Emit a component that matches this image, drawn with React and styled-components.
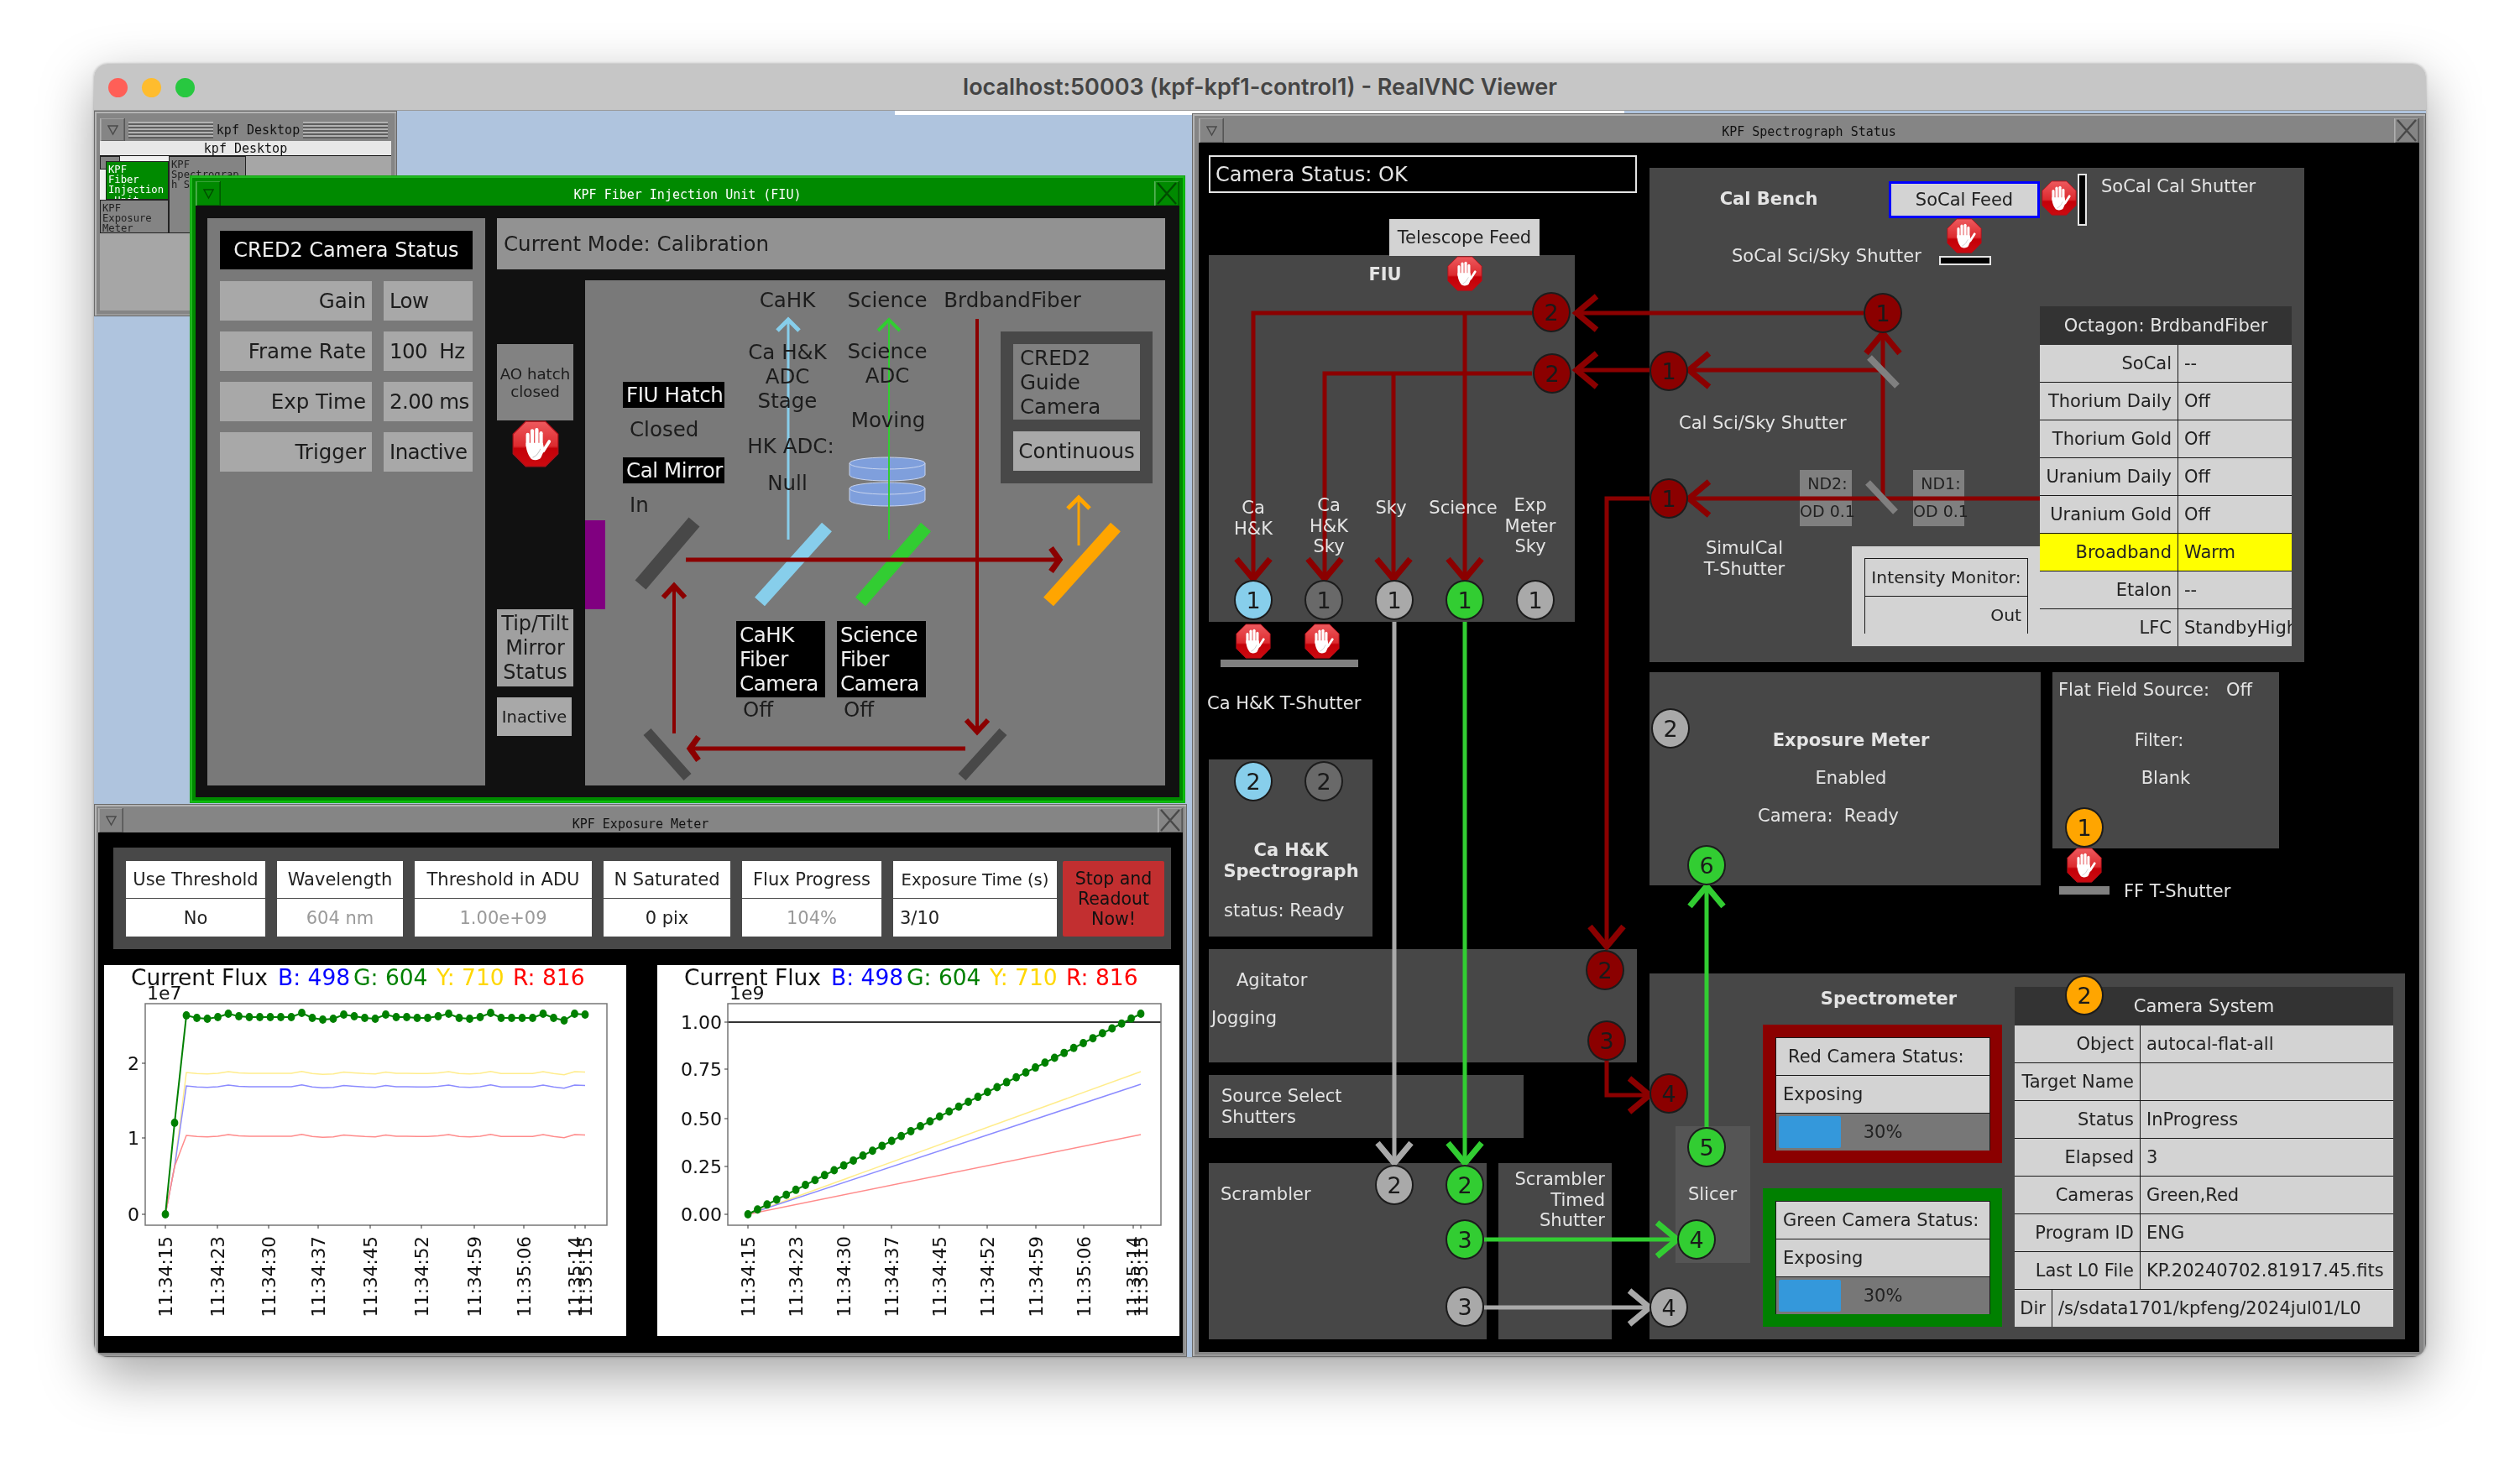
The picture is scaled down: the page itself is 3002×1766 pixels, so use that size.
import styled, { createGlobalStyle, css } from 'styled-components';

const GlobalStyle = createGlobalStyle`
   html, body { margin: 0; padding: 0; background: #ffffff; }
   * { box-sizing: border-box; }
`;

const SANS = `'DejaVu Sans', 'Liberation Sans', sans-serif`;
const MONO = `'DejaVu Sans Mono', 'Liberation Mono', monospace`;

// diagrams keep the page coordinates, each canvas only subtracts its origin
const box = (ox, oy) => css`
   position: absolute;
   left: ${p => p.$x - ox}px;
   top: ${p => p.$y - oy}px;
   width: ${p => p.$x2 - p.$x}px;
   height: ${p => p.$y2 - p.$y}px;
`;
const anchored = (ox, oy) => css`
   position: absolute;
   left: ${p => p.$x - ox}px;
   top: ${p => p.$y - oy}px;
   transform: translate(${p => (p.$align === 'left' ? '0' : p.$align === 'right' ? '-100%' : '-50%')}, -50%);
   text-align: ${p => p.$align || 'center'};
   white-space: pre;
`;

const Page = styled.div`
   width: 3002px;
   height: 1766px;
   padding: 76px 0 0 112px;
   overflow: hidden;
   background: #ffffff;
   font-family: ${SANS};
`;
const MacWindow = styled.div`
   width: 2778px;
   height: 1541px;
   border-radius: 16px;
   overflow: hidden;
   display: flex;
   flex-direction: column;
   box-shadow: 0 22px 64px rgba(0, 0, 0, 0.36), 0 0 3px rgba(0, 0, 0, 0.3);
`;
const MacBar = styled.div`
   height: 56px;
   flex: none;
   position: relative;
   display: flex;
   align-items: center;
   justify-content: center;
   background: #c6c6c6;
   border-bottom: 1px solid #9a9a9a;
   font-family: Inter, 'Liberation Sans', sans-serif;
   font-weight: 600;
   font-size: 27px;
   color: #444444;
`;
const Lights = styled.div`
   position: absolute;
   left: 17px;
   top: 17px;
   display: flex;
   gap: 17px;
`;
const Light = styled.span`
   width: 23px;
   height: 23px;
   border-radius: 50%;
   background: ${p => p.$color};
`;
const Desktop = styled.div`
   position: relative;
   flex: 1;
   background: #afc4de;
   filter: blur(0.5px);
`;
const TopStrip = styled.div`
   position: absolute;
   left: 954px;
   top: 0;
   width: 869px;
   height: 5px;
   background: #ffffff;
`;

const WinFrame = styled.div`
   position: absolute;
   left: ${p => p.$left}px;
   top: ${p => p.$top}px;
   width: ${p => p.$width}px;
   height: ${p => p.$height}px;
   display: flex;
   flex-direction: column;
   padding: ${p => p.$pad || 6}px ${p => p.$padX || p.$pad || 6}px;
   background: ${p => (p.$green ? '#008a00' : '#858585')};
   border: 1px solid ${p => (p.$green ? '#14a814' : '#6a6a6a')};
   box-shadow: inset 2px 2px 0 ${p => (p.$green ? '#1fb81f' : '#b4b4b4')}, inset -2px -2px 0 ${p => (p.$green ? '#0cc00c' : '#9a9a9a')};
`;
const WinTitle = styled.div`
   height: ${p => p.$h || 29}px;
   flex: none;
   display: flex;
   align-items: center;
   font-family: ${MONO};
   font-size: 15px;
   color: ${p => (p.$green ? '#ffffff' : '#111111')};
`;
const TitleKey = styled.div`
   width: 30px;
   height: 100%;
   flex: none;
   display: flex;
   align-items: center;
   justify-content: center;
   color: rgba(0, 0, 0, 0.45);
   border-right: 1px solid rgba(0, 0, 0, 0.35);
   border-left: 1px solid rgba(255, 255, 255, 0.35);
   box-shadow: inset 1px 1px 0 rgba(255, 255, 255, 0.22), inset -1px -1px 0 rgba(0, 0, 0, 0.22);
`;
const TitleText = styled.div`
   flex: 1;
   text-align: center;
   white-space: pre;
   padding-top: ${p => p.$drop || 0}px;
`;

// pager
const Pager = styled(WinFrame)`
   padding: 8px 6px 6px;
`;
const Stripes = styled.span`
   flex: 1;
   height: 20px;
   margin: 0 4px;
   background: repeating-linear-gradient(to bottom, #b2b2b2 0 2px, #5e5e5e 2px 4px);
`;
const PagerName = styled.div`
   height: 18px;
   flex: none;
   display: flex;
   align-items: center;
   justify-content: center;
   background: #e8e8e8;
   border-bottom: 1px solid #111111;
   font-family: ${MONO};
   font-size: 15px;
   color: #111111;
`;
const PagerArea = styled.div`
   position: relative;
   flex: 1;
   background: #a6a6a6;
`;
const MiniWin = styled.div`
   position: absolute;
   left: ${p => p.$left}px;
   top: ${p => p.$top}px;
   width: ${p => p.$w}px;
   height: ${p => p.$h}px;
   overflow: hidden;
   padding: 3px 2px;
   background: ${p => (p.$green ? '#008a00' : p.$blank ? '#f0f0f0' : '#848484')};
   color: ${p => (p.$green ? '#ffffff' : '#222222')};
   border: ${p => (p.$blank ? 'none' : '1px solid #222222')};
   font-family: ${MONO};
   font-size: 12.2px;
   line-height: 12.2px;
   white-space: pre;
`;

// FIU window
const FiuBody = styled.div`
   flex: 1;
   display: grid;
   grid-template-columns: 331px 91px 691px;
   grid-template-rows: 61px 602px;
   column-gap: 14px;
   row-gap: 13px;
   padding: 15px 0 0 14px;
   background: #111111;
   color: #1c1c1c;
   font-size: 24.5px;
`;
const FiuStatus = styled.div`
   grid-row: 1 / span 2;
   display: grid;
   grid-template-columns: 181px 106px;
   grid-auto-rows: 47px;
   column-gap: 14px;
   row-gap: 13px;
   align-content: start;
   padding: 15px;
   background: #797979;
`;
const StatusHead = styled.div`
   grid-column: 1 / span 2;
   height: 46px;
   display: flex;
   align-items: center;
   justify-content: center;
   background: #000000;
   color: #f0f0f0;
   font-size: 24px;
`;
const StatusCell = styled.div`
   display: flex;
   align-items: center;
   justify-content: ${p => (p.$label ? 'flex-end' : 'flex-start')};
   padding: 0 7px;
   background: #a8a8a8;
   white-space: pre;
   letter-spacing: ${p => (p.$label ? 0 : -0.6)}px;
`;
const ModeBar = styled.div`
   grid-column: 2 / span 2;
   display: flex;
   align-items: center;
   padding-left: 8px;
   background: #929292;
`;
const FiuMiddle = styled.div`
   display: flex;
   flex-direction: column;
   align-items: flex-start;
   padding-top: 76px;
`;
const HatchBox = styled.div`
   width: 91px;
   height: 91px;
   display: flex;
   align-items: center;
   justify-content: center;
   text-align: center;
   background: #828282;
   font-size: 18.2px;
   line-height: 21px;
`;
const TiltBox = styled.div`
   width: 91px;
   height: 92px;
   margin-top: 169px;
   display: flex;
   align-items: center;
   justify-content: center;
   text-align: center;
   background: #a0a0a0;
   font-size: 24px;
   line-height: 29px;
`;
const TiltState = styled.div`
   width: 89px;
   height: 46px;
   margin-top: 13px;
   display: flex;
   align-items: center;
   justify-content: center;
   background: #a8a8a8;
   font-size: 19.5px;
`;
const HatchStop = styled.div`
   width: 91px;
   display: flex;
   justify-content: center;
`;
const FiuCanvas = styled.div`
   position: relative;
   background: #797979;
`;
const FiuText = styled.div`
   ${anchored(697, 334)}
   line-height: 29px;
`;
const FiuTag = styled.div`
   ${box(697, 334)}
   display: flex;
   align-items: center;
   padding-left: 4px;
   background: #000000;
   color: #f0f0f0;
   white-space: pre-line;
   line-height: 29px;
   letter-spacing: -0.4px;
`;
const Purple = styled.div`
   ${box(697, 334)}
   background: #800080;
`;
const GuideBox = styled.div`
   ${box(697, 334)}
   display: flex;
   flex-direction: column;
   gap: 14px;
   padding: 15px;
   background: #484848;
`;
const GuideName = styled.div`
   height: 91px;
   display: flex;
   align-items: center;
   padding-left: 8px;
   background: #808080;
   white-space: pre-line;
   line-height: 29px;
`;
const GuideMode = styled.div`
   height: 47px;
   display: flex;
   align-items: center;
   justify-content: center;
   background: #a8a8a8;
`;
const FiuSvg = styled.svg`
   position: absolute;
   left: 0;
   top: 0;
`;

// exposure meter window
const MeterBody = styled.div`
   flex: 1;
   display: flex;
   flex-direction: column;
   background: #000000;
   padding-top: 18px;
`;
const MeterBar = styled.div`
   display: flex;
   gap: 14px;
   height: 121px;
   width: 1260px;
   margin-left: 18px;
   padding: 16px 7px 0 15px;
   background: #484848;
`;
const MeterCell = styled.div`
   width: ${p => p.$w}px;
   height: 90px;
   display: grid;
   grid-template-rows: 44px 45px;
   row-gap: 1px;
`;
const MeterName = styled.div`
   display: flex;
   align-items: center;
   justify-content: center;
   background: #ffffff;
   color: #222222;
   font-size: ${p => p.$size || 21}px;
   white-space: pre;
`;
const MeterValue = styled(MeterName)`
   justify-content: ${p => (p.$left ? 'flex-start' : 'center')};
   padding-left: ${p => (p.$left ? 8 : 0)}px;
   color: ${p => (p.$dim ? '#9a9a9a' : '#222222')};
   font-size: 21px;
`;
const StopNow = styled.div`
   width: 121px;
   height: 90px;
   margin-left: -7px;
   display: flex;
   align-items: center;
   justify-content: center;
   text-align: center;
   background: #c22f30;
   border-radius: 2px;
   color: #111111;
   font-size: 20.5px;
   line-height: 24px;
`;
const Plots = styled.div`
   display: flex;
   gap: 37px;
   margin-top: 19px;
   padding-left: 7px;
`;
const PlotSvg = styled.svg`
   display: block;
   background: #ffffff;
   font-family: ${SANS};
`;

// spectrograph window
const SpecBody = styled.div`
   position: relative;
   flex: 1;
   background: #000000;
   color: #e4e4e4;
   font-size: 21px;
`;
const SpecSvg = styled.svg`
   position: absolute;
   left: 0;
   top: 0;
`;
const SpecPanel = styled.div`
   ${box(1428, 170)}
   background: ${p => p.$color || '#474747'};
`;
const SpecText = styled.div`
   ${anchored(1428, 170)}
   line-height: 24.5px;
   font-weight: ${p => (p.$bold ? 700 : 400)};
   color: ${p => p.$color || '#e4e4e4'};
`;
const CameraStatus = styled.div`
   ${box(1428, 170)}
   display: flex;
   align-items: center;
   padding-left: 6px;
   border: 2px solid #e4e4e4;
   font-size: 24px;
`;
const FeedButton = styled.div`
   ${box(1428, 170)}
   display: flex;
   align-items: center;
   justify-content: center;
   background: #d3d3d3;
   color: #222222;
   border: ${p => (p.$active ? '3px solid #0000ff' : 'none')};
`;
const Bar = styled.div`
   ${box(1428, 170)}
   background: ${p => (p.$outlined ? '#000000' : '#808080')};
   border: ${p => (p.$outlined ? '2px solid #e4e4e4' : 'none')};
`;
const FilterTag = styled.div`
   ${box(1428, 170)}
   display: grid;
   grid-template-rows: 31px 36px;
   justify-items: center;
   align-items: center;
   background: #808080;
   color: #222222;
   font-size: 19px;
   white-space: pre;
`;
const Node = styled.div`
   position: absolute;
   left: ${p => p.$x - 1428 - 23}px;
   top: ${p => p.$y - 170 - 24}px;
   width: 46px;
   height: 48px;
   display: flex;
   align-items: center;
   justify-content: center;
   border-radius: 50%;
   background: ${p => p.$color};
   border: 2px solid #1c1c1c;
   color: #1a1a1a;
   font-size: 27px;
`;
const StopAt = styled.div`
   position: absolute;
   left: ${p => p.$x - 1428 - 21}px;
   top: ${p => p.$y - 170 - 21}px;
   display: flex;
`;
const DataTable = styled.div`
   ${box(1428, 170)}
   display: flex;
   flex-direction: column;
   color: #222222;
`;
const TableHead = styled.div`
   flex: none;
   height: ${p => p.$h}px;
   display: flex;
   align-items: center;
   justify-content: center;
   background: #333333;
   color: #e4e4e4;
`;
const TableRows = styled.div`
   display: flex;
   flex-direction: column;
   gap: 1px;
   background: #1a1a1a;
`;
const TableRow = styled.div`
   display: grid;
   grid-template-columns: ${p => p.$label}px 1fr;
   column-gap: 1px;
   height: 44px;
`;
const TableCell = styled.div`
   display: flex;
   align-items: center;
   justify-content: ${p => (p.$label ? 'flex-end' : 'flex-start')};
   padding: 0 7px;
   overflow: hidden;
   white-space: pre;
   background: ${p => (p.$hot ? '#ffff00' : '#d3d3d3')};
`;
const MonitorBox = styled.div`
   ${box(1428, 170)}
   padding: 14px 15px;
   background: #d3d3d3;
   color: #222222;
   font-size: 20.3px;
`;
const MonitorInner = styled.div`
   display: grid;
   grid-template-rows: 44px 44px;
   height: 90px;
   row-gap: 1px;
   background: #1a1a1a;
   border: 1px solid #1a1a1a;
`;
const MonitorCell = styled.div`
   display: flex;
   align-items: center;
   justify-content: ${p => (p.$right ? 'flex-end' : 'center')};
   padding: 0 7px;
   background: #d3d3d3;
   white-space: pre;
`;
const CameraFrame = styled.div`
   ${box(1428, 170)}
   padding: 15px 14px 15px 15px;
   background: ${p => p.$color};
`;
const CameraRows = styled.div`
   display: grid;
   grid-template-rows: 44px 44px 44px;
   row-gap: 1px;
   height: 135px;
   background: #1a1a1a;
   border: 1px solid #1a1a1a;
   color: #222222;
`;
const CameraCell = styled.div`
   display: flex;
   align-items: center;
   padding-left: ${p => p.$pad || 8}px;
   background: #d3d3d3;
`;
const Progress = styled.div`
   position: relative;
   display: flex;
   align-items: center;
   justify-content: center;
   padding: 3px;
   background: #777777;
`;
const ProgressFill = styled.div`
   position: absolute;
   left: 3px;
   top: 3px;
   bottom: 3px;
   width: 74px;
   border-radius: 2px;
   background: #3498db;
`;

const StopSign = ({ size = 42 }) => (
   <svg width={size} height={size} viewBox='0 0 48 48'>
      <defs>
         <linearGradient id='stopFill' x1='0' y1='0' x2='0' y2='1'>
            <stop offset='0' stopColor='#ee5a5e' />
            <stop offset='0.55' stopColor='#dc2a2e' />
            <stop offset='0.6' stopColor='#c40008' />
            <stop offset='1' stopColor='#cc0a10' />
         </linearGradient>
      </defs>
      <polygon
         points='14,1 34,1 47,14 47,34 34,47 14,47 1,34 1,14'
         fill='url(#stopFill)'
         stroke='#b0101a'
      />
      <g stroke='#ffffff' strokeLinecap='round' fill='none' strokeWidth='3.6'>
         <line x1='16' y1='26' x2='16' y2='14.5' />
         <line x1='20.6' y1='24' x2='20.6' y2='10.5' />
         <line x1='25.2' y1='24' x2='25.2' y2='9.5' />
         <line x1='29.6' y1='25' x2='29.6' y2='13' />
         <line x1='32' y1='31' x2='38' y2='21.5' strokeWidth='3.2' />
      </g>
      <path
         d='M14.2 23 H31.4 L33 30 L29.5 38 C28 41 20 41.5 18.5 38 C16 34 14.2 30 14.2 23 Z'
         fill='#ffffff'
      />
      <path d='M21 38 Q26 36 29 29' stroke='#c8c8c8' strokeWidth='0.9' fill='none' />
   </svg>
);

const MenuGlyph = () => (
   <svg width='13' height='14' viewBox='0 0 13 14'>
      <path d='M1 2 H12 L6.5 12 Z' fill='none' stroke='currentColor' strokeWidth='1.4' />
   </svg>
);

const CloseGlyph = () => (
   <svg width='26' height='27' viewBox='0 0 26 27'>
      <path d='M2 1 L24 26 M24 1 L2 26' stroke='currentColor' strokeWidth='2.4' />
   </svg>
);

// polyline that ends in an open V head
const Arrow = ({ points, color, width = 5, len = 24, span = 20 }) => {
   const pts = points.split(' ').map(p => p.split(',').map(Number));
   const [tx, ty] = pts[pts.length - 1];
   const [px, py] = pts[pts.length - 2];
   const d = Math.hypot(tx - px, ty - py);
   const ux = (tx - px) / d;
   const uy = (ty - py) / d;
   const a = `${tx - ux * len - uy * span},${ty - uy * len + ux * span}`;
   const b = `${tx - ux * len + uy * span},${ty - uy * len - ux * span}`;
   return (
      <g fill='none' stroke={color}>
         <polyline points={points} strokeWidth={width} />
         <polyline points={`${a} ${tx},${ty} ${b}`} strokeWidth={width + 2} />
      </g>
   );
};

const RED = '#8b0000';
const GREEN = '#32cd32';
const GREY = '#a9a9a9';
const ORANGE = '#ffa500';

const FiuDiagram = () => (
   <FiuSvg width='691' height='602' viewBox='697 334 691 602'>
      <g fill='none' strokeLinecap='butt'>
         <line x1='827' y1='622' x2='763' y2='697' stroke='#484848' strokeWidth='17' />
         <line x1='985' y1='628' x2='905' y2='717' stroke='#87ceeb' strokeWidth='16' />
         <line x1='1103' y1='628' x2='1025' y2='717' stroke='#32cd32' strokeWidth='16' />
         <line x1='1329' y1='628' x2='1249' y2='717' stroke='#ffa500' strokeWidth='16' />
         <line x1='771' y1='872' x2='819' y2='926' stroke='#484848' strokeWidth='12' />
         <line x1='1195' y1='872' x2='1146' y2='926' stroke='#484848' strokeWidth='12' />
      </g>
      <g fill='#7f9fdc' stroke='#c8d4ee' strokeWidth='1'>
         <path d='M1012 552 v14 a45 7 0 0 0 90 0 v-14 z' />
         <ellipse cx='1057' cy='552' rx='45' ry='7' />
         <path d='M1012 582 v14 a45 7 0 0 0 90 0 v-14 z' />
         <ellipse cx='1057' cy='582' rx='45' ry='7' />
      </g>
      <Arrow points='939,643 939,381' color='#87ceeb' width={3} len={13} span={13} />
      <Arrow points='1059,643 1059,381' color='#32cd32' width={2} len={13} span={13} />
      <Arrow points='1285,650 1285,593' color='#ffa500' width={3} len={13} span={13} />
      <Arrow points='817,667 1262,667' color={RED} width={5} len={10} span={14} />
      <Arrow points='1164,380 1164,872' color={RED} width={4} len={14} span={13} />
      <Arrow points='1150,892 822,892' color={RED} width={5} len={10} span={14} />
      <Arrow points='803,874 803,698' color={RED} width={4} len={14} span={13} />
   </FiuSvg>
);

const FIU_TEXT = [
   ['CaHK', 938, 357],
   ['Science', 1057, 357],
   ['BrdbandFiber', 1206, 357],
   ['Ca H&K\nADC\nStage', 938, 448],
   ['Science\nADC', 1057, 433],
   ['Moving', 1058, 500],
   ['HK ADC:', 942, 531],
   ['Null', 938, 575],
   ['Closed', 750, 511, 'left'],
   ['In', 750, 601, 'left'],
   ['Off', 885, 845, 'left'],
   ['Off', 1005, 845, 'left'],
];

const greenOffsets = [0, 3, 4, 2, -2, 1, 2, 2, 2, 2, 2, -3, 3, 5, 4, -1, 1, 3, 4, -1, 2, 2, 3, 3, 1, -2, 3, 4, 2, -3, 3, 3, 3, 3, -2, 3, 6, -2, -1];
const bumpOffsets = greenOffsets.map(v => v * 0.45);

const steadyPath = base => {
   const head = `197,1447 208,1390`;
   const rest = bumpOffsets.map((v, i) => `${222 + i * 12.5},${base + v}`).join(' ');
   return `${head} ${rest}`;
};

const TIMES = ['11:34:15', '11:34:23', '11:34:30', '11:34:37', '11:34:45', '11:34:52', '11:34:59', '11:35:06', '11:35:14', '11:35:15'];

const PlotFrame = ({ titleX, left, right, xTicks, yTicks, exponent, children }) => (
   <>
      <g fontSize='26.5'>
         <text x={titleX} y='1174' fill='#111111'>Current Flux</text>
         <text x={titleX + 175} y='1174' fill='#0000ff'>B: 498</text>
         <text x={titleX + 265} y='1174' fill='#008000'>G: 604</text>
         <text x={titleX + 364} y='1174' fill='#ffd700'>Y: 710</text>
         <text x={titleX + 455} y='1174' fill='#ff0000'>R: 816</text>
      </g>
      <text x={left + 2} y='1191' fontSize='22' fill='#111111'>{exponent}</text>
      {children}
      <rect x={left} y='1196' width={right - left} height='264' fill='none' stroke='#777777' strokeWidth='1.5' />
      {yTicks.map(([label, y]) => (
         <g key={label}>
            <line x1={left - 4} x2={left} y1={y} y2={y} stroke='#333333' />
            <text x={left - 7} y={y + 8} fontSize='22' textAnchor='end' fill='#111111'>{label}</text>
         </g>
      ))}
      {xTicks.map((x, i) => (
         <g key={TIMES[i]}>
            <line x1={x} x2={x} y1='1460' y2='1464' stroke='#333333' />
            <text
               x={x + 8}
               y='1473'
               fontSize='21.5'
               textAnchor='end'
               fill='#111111'
               transform={`rotate(-90 ${x + 8} 1473)`}
            >
               {TIMES[i]}
            </text>
         </g>
      ))}
   </>
);

const FluxRatePlot = () => {
   const greenTail = greenOffsets.map((v, i) => [222 + i * 12.5, 1210 + v]);
   const green = [[197, 1447], [208, 1338], ...greenTail];
   return (
      <PlotSvg width='622' height='442' viewBox='124 1150 622 442'>
         <PlotFrame
            titleX={156}
            left={173}
            right={723}
            exponent='1e7'
            xTicks={[197, 259, 320, 379, 441, 502, 565, 624, 685, 697]}
            yTicks={[['2', 1267], ['1', 1356], ['0', 1447]]}
         >
            <g fill='none' strokeWidth='1.5' opacity='0.45'>
               <polyline points={steadyPath(1278)} stroke='#ffd700' />
               <polyline points={steadyPath(1294)} stroke='#0000ff' />
               <polyline points={steadyPath(1353)} stroke='#ff0000' />
            </g>
            <polyline points={green.map(p => p.join(',')).join(' ')} fill='none' stroke='#008000' strokeWidth='2' />
            {green.map(([x, y]) => (
               <ellipse key={x} cx={x} cy={y} rx='4.4' ry='5' fill='#008000' />
            ))}
         </PlotFrame>
      </PlotSvg>
   );
};

const FluxTotalPlot = () => {
   const dots = Array.from({ length: 42 }, (_, i) => {
      const t = i / 41;
      return [891 + t * 468, 1447 - t * 239];
   });
   return (
      <PlotSvg width='622' height='442' viewBox='783 1150 622 442'>
         <PlotFrame
            titleX={815}
            left={867}
            right={1383}
            exponent='1e9'
            xTicks={[891, 948, 1005, 1062, 1119, 1176, 1234, 1291, 1350, 1359]}
            yTicks={[['1.00', 1218], ['0.75', 1274], ['0.50', 1333], ['0.25', 1390], ['0.00', 1447]]}
         >
            <line x1='867' x2='1383' y1='1218' y2='1218' stroke='#333333' strokeWidth='2' />
            <g fill='none' strokeWidth='1.5' opacity='0.45'>
               <line x1='891' y1='1447' x2='1359' y2='1277' stroke='#ffd700' />
               <line x1='891' y1='1447' x2='1359' y2='1292' stroke='#0000ff' />
               <line x1='891' y1='1447' x2='1359' y2='1352' stroke='#ff0000' />
            </g>
            <polyline points={dots.map(p => p.join(',')).join(' ')} fill='none' stroke='#008000' strokeWidth='2' />
            {dots.map(([x, y]) => (
               <ellipse key={x} cx={x} cy={y} rx='4.4' ry='5' fill='#008000' />
            ))}
         </PlotFrame>
      </PlotSvg>
   );
};

const METER_CELLS = [
   [166, 'Use Threshold', 'No', false],
   [150, 'Wavelength', '604 nm', true],
   [211, 'Threshold in ADU', '1.00e+09', true],
   [151, 'N Saturated', '0 pix', false],
   [166, 'Flux Progress', '104%', true],
];

const OCTAGON = [
   ['SoCal', '--'],
   ['Thorium Daily', 'Off'],
   ['Thorium Gold', 'Off'],
   ['Uranium Daily', 'Off'],
   ['Uranium Gold', 'Off'],
   ['Broadband', 'Warm', true],
   ['Etalon', '--'],
   ['LFC', 'StandbyHigh'],
];

const CAMERA_SYSTEM = [
   ['Object', 'autocal-flat-all'],
   ['Target Name', ''],
   ['Status', 'InProgress'],
   ['Elapsed', '3'],
   ['Cameras', 'Green,Red'],
   ['Program ID', 'ENG'],
   ['Last L0 File', 'KP.20240702.81917.45.fits'],
];

const NODES = [
   ['2', 1848, 372, RED],
   ['2', 1849, 445, RED],
   ['1', 1988, 442, RED],
   ['1', 1988, 594, RED],
   ['1', 2243, 373, RED],
   ['1', 1493, 715, '#87ceeb'],
   ['1', 1577, 715, '#696969'],
   ['1', 1661, 715, GREY],
   ['1', 1745, 715, GREEN],
   ['1', 1829, 715, GREY],
   ['2', 1493, 931, '#87ceeb'],
   ['2', 1577, 931, '#696969'],
   ['2', 1912, 1156, RED],
   ['3', 1914, 1240, RED],
   ['4', 1988, 1303, RED],
   ['2', 1661, 1412, GREY],
   ['2', 1745, 1412, GREEN],
   ['3', 1745, 1477, GREEN],
   ['3', 1745, 1557, GREY],
   ['4', 1988, 1558, GREY],
   ['4', 2021, 1477, GREEN],
   ['5', 2033, 1367, GREEN],
   ['6', 2033, 1031, GREEN],
   ['2', 1990, 868, GREY],
   ['1', 2483, 986, ORANGE],
];

const SPEC_TEXT = [
   ['FIU', 1650, 327, 'center', true],
   ['Ca\nH&K', 1493, 617],
   ['Ca\nH&K\nSky', 1583, 627],
   ['Sky', 1657, 605],
   ['Science', 1743, 605],
   ['Exp\nMeter\nSky', 1823, 627],
   ['Ca H&K T-Shutter', 1438, 838, 'left'],
   ['Ca H&K\nSpectrograph', 1538, 1025, 'center', true],
   ['status: Ready', 1458, 1085, 'left'],
   ['Agitator', 1473, 1168, 'left'],
   ['Jogging', 1443, 1213, 'left'],
   ['Source Select\nShutters', 1455, 1318, 'left'],
   ['Scrambler', 1454, 1423, 'left'],
   ['Scrambler\nTimed\nShutter', 1912, 1430, 'right'],
   ['Slicer', 2040, 1423],
   ['Cal Bench', 2107, 237, 'center', true],
   ['SoCal Sci/Sky Shutter', 2063, 305, 'left'],
   ['SoCal Cal Shutter', 2503, 222, 'left'],
   ['Cal Sci/Sky Shutter', 2000, 504, 'left'],
   ['SimulCal\nT-Shutter', 2078, 665],
   ['Exposure Meter', 2205, 882, 'center', true],
   ['Enabled', 2205, 927],
   ['Camera:  Ready', 2094, 972, 'left'],
   ['Flat Field Source:   Off', 2452, 822, 'left'],
   ['Filter:', 2572, 882],
   ['Blank', 2580, 927],
   ['FF T-Shutter', 2530, 1062, 'left'],
   ['Spectrometer', 2250, 1190, 'center', true],
];

const CameraBlock = ({ y, color, name }) => (
   <CameraFrame $x={2100} $y={y} $x2={2385} $y2={y + 165} $color={color}>
      <CameraRows>
         <CameraCell $pad={name.startsWith('Red') ? 14 : 8}>{name}</CameraCell>
         <CameraCell>Exposing</CameraCell>
         <Progress>
            <ProgressFill />
            30%
         </Progress>
      </CameraRows>
   </CameraFrame>
);

const SpectrographDiagram = () => (
   <SpecBody>
      <CameraStatus $x={1440} $y={185} $x2={1950} $y2={230}>Camera Status: OK</CameraStatus>
      <SpecPanel $x={1440} $y={304} $x2={1876} $y2={741} />
      <SpecPanel $x={1440} $y={905} $x2={1635} $y2={1116} />
      <SpecPanel $x={1440} $y={1131} $x2={1950} $y2={1266} />
      <SpecPanel $x={1440} $y={1281} $x2={1815} $y2={1356} />
      <SpecPanel $x={1440} $y={1386} $x2={1771} $y2={1596} />
      <SpecPanel $x={1785} $y={1386} $x2={1920} $y2={1596} />
      <SpecPanel $x={1965} $y={200} $x2={2745} $y2={789} />
      <SpecPanel $x={1965} $y={801} $x2={2431} $y2={1055} />
      <SpecPanel $x={2445} $y={801} $x2={2715} $y2={1011} />
      <SpecPanel $x={1965} $y={1160} $x2={2865} $y2={1596} />
      <SpecPanel $x={1996} $y={1342} $x2={2085} $y2={1505} $color='#555555' />
      <FeedButton $x={1655} $y={261} $x2={1834} $y2={305}>Telescope Feed</FeedButton>
      <FeedButton $x={2250} $y={216} $x2={2430} $y2={260} $active>SoCal Feed</FeedButton>
      <Bar $x={1454} $y={786} $x2={1618} $y2={795} />
      <Bar $x={2453} $y={1056} $x2={2513} $y2={1066} />
      <Bar $x={2475} $y={207} $x2={2486} $y2={269} $outlined />
      <Bar $x={2310} $y={305} $x2={2372} $y2={316} $outlined />
      <FilterTag $x={2144} $y={560} $x2={2206} $y2={627}>
         <span>ND2:</span>
         <span>OD 0.1</span>
      </FilterTag>
      <FilterTag $x={2279} $y={560} $x2={2340} $y2={627}>
         <span>ND1:</span>
         <span>OD 0.1</span>
      </FilterTag>
      <SpecSvg width='1454' height='1440' viewBox='1428 170 1454 1440'>
         <Arrow points='2220,373 1878,373' color={RED} />
         <Arrow points='1825,373 1493,373 1493,690' color={RED} />
         <Arrow points='1745,373 1745,690' color={RED} />
         <Arrow points='1825,445 1578,445 1578,690' color={RED} />
         <Arrow points='1660,445 1660,690' color={RED} />
         <Arrow points='1965,441 1878,441' color={RED} />
         <Arrow points='2243,441 2012,441' color={RED} />
         <Arrow points='2243,594 2243,397' color={RED} />
         <Arrow points='2430,594 2012,594' color={RED} />
         <Arrow points='1965,594 1914,594 1914,1128' color={RED} />
         <Arrow points='1914,1260 1914,1305 1965,1305' color={RED} />
         <Arrow points='1661,741 1661,1386' color={GREY} />
         <Arrow points='1768,1558 1965,1558' color={GREY} />
         <Arrow points='1745,741 1745,1386' color={GREEN} />
         <Arrow points='1768,1477 1998,1477' color={GREEN} />
         <Arrow points='2033,1344 2033,1056' color={GREEN} />
         <line x1='2227' y1='426' x2='2260' y2='460' stroke='#808080' strokeWidth='8' />
         <line x1='2225' y1='575' x2='2258' y2='610' stroke='#808080' strokeWidth='8' />
      </SpecSvg>
      {SPEC_TEXT.map(([text, x, y, align, bold]) => (
         <SpecText key={text} $x={x} $y={y} $align={align} $bold={bold}>{text}</SpecText>
      ))}
      {NODES.map(([digit, x, y, color]) => (
         <Node key={`${digit}-${x}-${y}`} $x={x} $y={y} $color={color}>{digit}</Node>
      ))}
      <StopAt $x={1745} $y={326}><StopSign /></StopAt>
      <StopAt $x={1493} $y={764}><StopSign /></StopAt>
      <StopAt $x={1575} $y={764}><StopSign /></StopAt>
      <StopAt $x={2453} $y={236}><StopSign /></StopAt>
      <StopAt $x={2340} $y={281}><StopSign /></StopAt>
      <StopAt $x={2483} $y={1031}><StopSign /></StopAt>
      <MonitorBox $x={2206} $y={651} $x2={2431} $y2={770}>
         <MonitorInner>
            <MonitorCell>Intensity Monitor:</MonitorCell>
            <MonitorCell $right>Out</MonitorCell>
         </MonitorInner>
      </MonitorBox>
      <DataTable $x={2430} $y={365} $x2={2730} $y2={770}>
         <TableHead $h={46}>Octagon: BrdbandFiber</TableHead>
         <TableRows>
            {OCTAGON.map(([label, value, hot]) => (
               <TableRow key={label} $label={164}>
                  <TableCell $label $hot={hot}>{label}</TableCell>
                  <TableCell $hot={hot}>{value}</TableCell>
               </TableRow>
            ))}
         </TableRows>
      </DataTable>
      <CameraBlock y={1221} color={RED} name='Red Camera Status:' />
      <CameraBlock y={1416} color='#008000' name='Green Camera Status:' />
      <DataTable $x={2400} $y={1176} $x2={2851} $y2={1581}>
         <TableHead $h={46}>Camera System</TableHead>
         <TableRows>
            {CAMERA_SYSTEM.map(([label, value]) => (
               <TableRow key={label} $label={149}>
                  <TableCell $label>{label}</TableCell>
                  <TableCell>{value}</TableCell>
               </TableRow>
            ))}
            <TableRow $label={44}>
               <TableCell $label>Dir</TableCell>
               <TableCell>/s/sdata1701/kpfeng/2024jul01/L0</TableCell>
            </TableRow>
         </TableRows>
      </DataTable>
      <Node $x={2483} $y={1186} $color={ORANGE}>2</Node>
   </SpecBody>
);

const App = () => (
   <>
      <GlobalStyle />
      <Page>
         <MacWindow>
            <MacBar>
               <Lights>
                  <Light $color='#ff5f57' />
                  <Light $color='#febc2e' />
                  <Light $color='#28c840' />
               </Lights>
               localhost:50003 (kpf-kpf1-control1) - RealVNC Viewer
            </MacBar>
            <Desktop>
               <TopStrip />
               <Pager $left={0} $top={0} $width={361} $height={245}>
                  <WinTitle $h={27}>
                     <TitleKey><MenuGlyph /></TitleKey>
                     <Stripes />
                     kpf Desktop
                     <Stripes />
                  </WinTitle>
                  <PagerName>kpf Desktop</PagerName>
                  <PagerArea>
                     <MiniWin $left={0} $top={0} $w={82} $h={52} $blank />
                     <MiniWin $left={0} $top={0} $w={24} $h={16} />
                     <MiniWin $left={82} $top={0} $w={92} $h={92}>{'KPF\nSpectrograp\nh S'}</MiniWin>
                     <MiniWin $left={0} $top={52} $w={82} $h={40}>{'KPF\nExposure\nMeter'}</MiniWin>
                     <MiniWin $left={7} $top={6} $w={75} $h={46} $green>{'KPF\nFiber\nInjection\n Unit'}</MiniWin>
                  </PagerArea>
               </Pager>
               <WinFrame $left={1308} $top={3} $width={1470} $height={1482} $pad={5} $padX={7}>
                  <WinTitle>
                     <TitleKey><MenuGlyph /></TitleKey>
                     <TitleText $drop={3}>KPF Spectrograph Status</TitleText>
                     <TitleKey><CloseGlyph /></TitleKey>
                  </WinTitle>
                  <SpectrographDiagram />
               </WinFrame>
               <WinFrame $left={114} $top={77} $width={1186} $height={748} $green>
                  <WinTitle $green>
                     <TitleKey><MenuGlyph /></TitleKey>
                     <TitleText $drop={2}>KPF Fiber Injection Unit (FIU)</TitleText>
                     <TitleKey><CloseGlyph /></TitleKey>
                  </WinTitle>
                  <FiuBody>
                     <FiuStatus>
                        <StatusHead>CRED2 Camera Status</StatusHead>
                        <StatusCell $label>Gain</StatusCell>
                        <StatusCell>Low</StatusCell>
                        <StatusCell $label>Frame Rate</StatusCell>
                        <StatusCell>100  Hz</StatusCell>
                        <StatusCell $label>Exp Time</StatusCell>
                        <StatusCell>2.00 ms</StatusCell>
                        <StatusCell $label>Trigger</StatusCell>
                        <StatusCell>Inactive</StatusCell>
                     </FiuStatus>
                     <ModeBar>Current Mode: Calibration</ModeBar>
                     <FiuMiddle>
                        <HatchBox>AO hatch<br />closed</HatchBox>
                        <HatchStop><StopSign size={56} /></HatchStop>
                        <TiltBox>Tip/Tilt<br />Mirror<br />Status</TiltBox>
                        <TiltState>Inactive</TiltState>
                     </FiuMiddle>
                     <FiuCanvas>
                        <Purple $x={697} $y={620} $x2={721} $y2={726} />
                        <FiuDiagram />
                        {FIU_TEXT.map(([text, x, y, align]) => (
                           <FiuText key={`${text}-${x}`} $x={x} $y={y} $align={align}>{text}</FiuText>
                        ))}
                        <FiuTag $x={742} $y={455} $x2={863} $y2={486}>FIU Hatch</FiuTag>
                        <FiuTag $x={742} $y={545} $x2={863} $y2={576}>Cal Mirror</FiuTag>
                        <FiuTag $x={877} $y={740} $x2={983} $y2={831}>{'CaHK\nFiber\nCamera'}</FiuTag>
                        <FiuTag $x={997} $y={740} $x2={1103} $y2={831}>{'Science\nFiber\nCamera'}</FiuTag>
                        <GuideBox $x={1192} $y={395} $x2={1373} $y2={576}>
                           <GuideName>{'CRED2\nGuide\nCamera'}</GuideName>
                           <GuideMode>Continuous</GuideMode>
                        </GuideBox>
                     </FiuCanvas>
                  </FiuBody>
               </WinFrame>
               <WinFrame $left={0} $top={826} $width={1302} $height={659} $pad={4}>
                  <WinTitle>
                     <TitleKey><MenuGlyph /></TitleKey>
                     <TitleText $drop={8}>KPF Exposure Meter</TitleText>
                     <TitleKey><CloseGlyph /></TitleKey>
                  </WinTitle>
                  <MeterBody>
                     <MeterBar>
                        {METER_CELLS.map(([w, name, value, dim]) => (
                           <MeterCell key={name} $w={w}>
                              <MeterName>{name}</MeterName>
                              <MeterValue $dim={dim}>{value}</MeterValue>
                           </MeterCell>
                        ))}
                        <MeterCell $w={195}>
                           <MeterName $size={19.5}>Exposure Time (s)</MeterName>
                           <MeterValue $left>3/10</MeterValue>
                        </MeterCell>
                        <StopNow>Stop and<br />Readout<br />Now!</StopNow>
                     </MeterBar>
                     <Plots>
                        <FluxRatePlot />
                        <FluxTotalPlot />
                     </Plots>
                  </MeterBody>
               </WinFrame>
            </Desktop>
         </MacWindow>
      </Page>
   </>
);

export default App;
